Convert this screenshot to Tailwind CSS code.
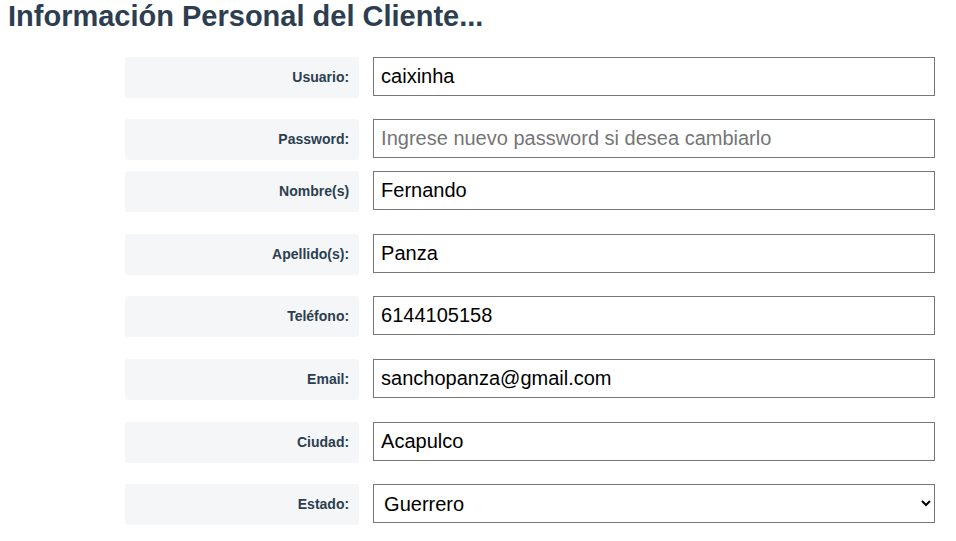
<!DOCTYPE html>
<html lang="es">
<head>
  <meta charset="UTF-8">
  <meta name="viewport" content="width=device-width, initial-scale=1.0">
  <title>Información Personal del Cliente</title>
  <script src="https://cdn.jsdelivr.net/npm/@tailwindcss/browser@4"></script>
</head>
<body class="bg-white font-['Liberation_Sans',sans-serif]">
  <h1 class="px-2 text-[29px] leading-8 font-bold text-[#2c3e50]">Información Personal del Cliente...</h1>

  <form class="mt-[25px] mr-[21px] ml-[125px]">
    <div class="mb-[21px] grid grid-cols-[5fr_12fr] gap-x-[14px]">
      <label for="usuario" class="h-[41px] rounded-[3px] bg-[#f4f6f7] px-[10px] text-right text-sm leading-[41px] font-bold text-[#2c3e50]">Usuario:</label>
      <input type="text" id="usuario" value="caixinha" class="h-[39px] w-full border border-[#767676] bg-white px-[7px] text-xl text-black">
    </div>
    <div class="mb-[11px] grid grid-cols-[5fr_12fr] gap-x-[14px]">
      <label for="password" class="h-[41px] rounded-[3px] bg-[#f4f6f7] px-[10px] text-right text-sm leading-[41px] font-bold text-[#2c3e50]">Password:</label>
      <input type="password" id="password" placeholder="Ingrese nuevo password si desea cambiarlo" class="h-[39px] w-full border border-[#767676] bg-white px-[7px] text-xl text-black placeholder:text-[#757575]">
    </div>
    <div class="mb-[22px] grid grid-cols-[5fr_12fr] gap-x-[14px]">
      <label for="nombre" class="h-[41px] rounded-[3px] bg-[#f4f6f7] px-[10px] text-right text-sm leading-[41px] font-bold text-[#2c3e50]">Nombre(s)</label>
      <input type="text" id="nombre" value="Fernando" class="h-[39px] w-full border border-[#767676] bg-white px-[7px] text-xl text-black">
    </div>
    <div class="mb-[21px] grid grid-cols-[5fr_12fr] gap-x-[14px]">
      <label for="apellido" class="h-[41px] rounded-[3px] bg-[#f4f6f7] px-[10px] text-right text-sm leading-[41px] font-bold text-[#2c3e50]">Apellido(s):</label>
      <input type="text" id="apellido" value="Panza" class="h-[39px] w-full border border-[#767676] bg-white px-[7px] text-xl text-black">
    </div>
    <div class="mb-[22px] grid grid-cols-[5fr_12fr] gap-x-[14px]">
      <label for="telefono" class="h-[41px] rounded-[3px] bg-[#f4f6f7] px-[10px] text-right text-sm leading-[41px] font-bold text-[#2c3e50]">Teléfono:</label>
      <input type="tel" id="telefono" value="6144105158" class="h-[39px] w-full border border-[#767676] bg-white px-[7px] text-xl text-black">
    </div>
    <div class="mb-[22px] grid grid-cols-[5fr_12fr] gap-x-[14px]">
      <label for="email" class="h-[41px] rounded-[3px] bg-[#f4f6f7] px-[10px] text-right text-sm leading-[41px] font-bold text-[#2c3e50]">Email:</label>
      <input type="email" id="email" value="sanchopanza@gmail.com" class="h-[39px] w-full border border-[#767676] bg-white px-[7px] text-xl text-black">
    </div>
    <div class="mb-[21px] grid grid-cols-[5fr_12fr] gap-x-[14px]">
      <label for="ciudad" class="h-[41px] rounded-[3px] bg-[#f4f6f7] px-[10px] text-right text-sm leading-[41px] font-bold text-[#2c3e50]">Ciudad:</label>
      <input type="text" id="ciudad" value="Acapulco" class="h-[39px] w-full border border-[#767676] bg-white px-[7px] text-xl text-black">
    </div>
    <div class="grid grid-cols-[5fr_12fr] gap-x-[14px]">
      <label for="estado" class="h-[41px] rounded-[3px] bg-[#f4f6f7] px-[10px] text-right text-sm leading-[41px] font-bold text-[#2c3e50]">Estado:</label>
      <select id="estado" class="h-[39px] w-full border border-[#767676] bg-white px-[6px] text-xl text-black">
        <option selected>Guerrero</option>
      </select>
    </div>
  </form>
</body>
</html>
